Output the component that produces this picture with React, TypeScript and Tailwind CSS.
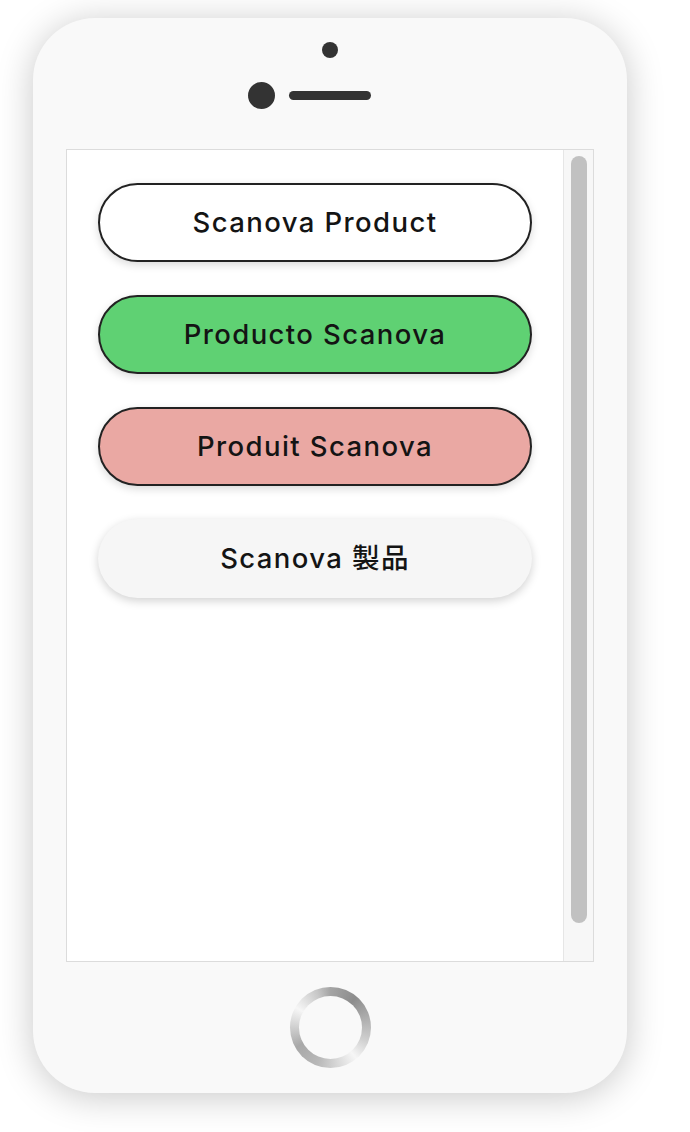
const items = [
  { label: 'Scanova Product', cls: 'bg-white border-2 border-[#222]' },
  { label: 'Producto Scanova', cls: 'bg-[#5fd173] border-2 border-[#222]' },
  { label: 'Produit Scanova', cls: 'bg-[#eaa8a3] border-2 border-[#222]' },
  { label: 'Scanova 製品', cls: 'bg-[#f6f6f6] shadow-[0_3px_10px_rgba(0,0,0,0.18)]' },
]

export default function App() {
  return (
    <div className="min-h-[1132px] bg-white pt-[18px] pl-[33px]">
      {/* phone body */}
      <div className="flex h-[1075px] w-[594px] flex-col rounded-[62px] bg-[#f9f9f9] shadow-[0_4px_36px_rgba(0,0,0,0.22)]">
        {/* top: camera + speaker */}
        <div className="flex h-[131px] flex-col items-center pt-[24px]">
          <div className="h-4 w-4 rounded-full bg-[#333]" />
          <div className="mr-[42px] mt-[24px] flex items-center gap-[14px]">
            <div className="h-[27px] w-[27px] rounded-full bg-[#333]" />
            <div className="h-[9px] w-[82px] rounded-full bg-[#333]" />
          </div>
        </div>

        {/* screen */}
        <div className="mx-[33px] flex h-[813px] border border-[#dcdcdc] bg-white">
          <div className="flex flex-1 flex-col gap-[33px] px-[31px] pt-[33px]">
            {items.map((it) => (
              <button
                key={it.label}
                className={
                  'flex h-[79px] w-full items-center justify-center rounded-full text-[27.5px] font-medium tracking-[1.4px] text-[#141414] shadow-[0_3px_8px_rgba(0,0,0,0.15)] ' +
                  it.cls
                }
                style={{ fontFamily: 'Inter, "Noto Sans CJK JP", sans-serif' }}
              >
                {it.label}
              </button>
            ))}
          </div>
          {/* scrollbar */}
          <div className="flex w-[30px] justify-center border-l border-[#e6e6e6] bg-[#f7f7f7] pt-[6px]">
            <div className="h-[767px] w-[16px] rounded-full bg-[#c1c1c1]" />
          </div>
        </div>

        {/* home button */}
        <div className="flex flex-1 items-center justify-center">
          <div className="flex h-[81px] w-[81px] items-center justify-center rounded-full bg-[conic-gradient(from_0deg,#a4a4a4,#8c8c8c_40deg,#cfcfcf_110deg,#f6f6f6_140deg,#b8b8b8_200deg,#a8a8a8_240deg,#f6f6f6_300deg,#c6c6c6_340deg,#a4a4a4)]">
            <div className="h-[63px] w-[63px] rounded-full bg-[#f9f9f9]" />
          </div>
        </div>
      </div>
    </div>
  )
}
